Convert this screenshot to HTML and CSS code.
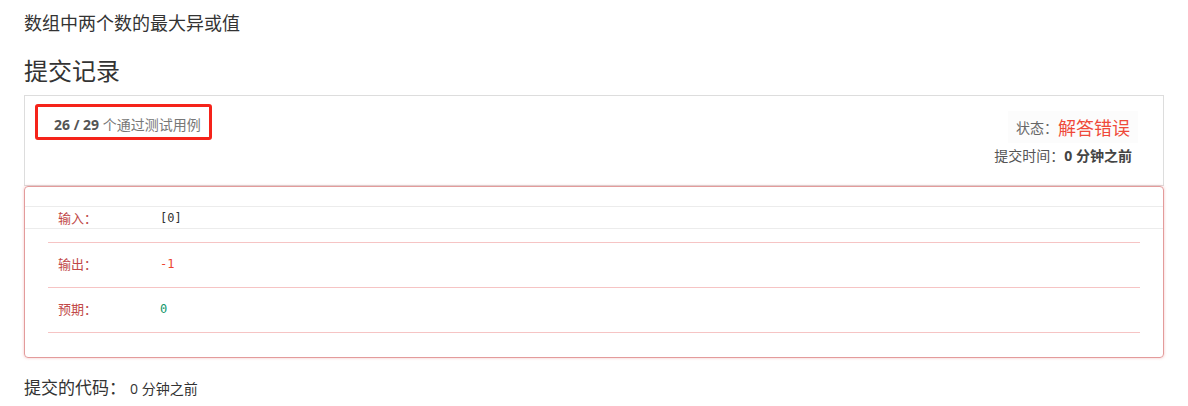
FILE: index.html
```html
<!DOCTYPE html>
<html lang="zh-CN">
<head>
    <meta charset="UTF-8">
    <title>提交记录</title>
    <link rel="stylesheet" href="styles.css">
</head>
<body>
<div class="page">
    <div class="problem-title">数组中两个数的最大异或值</div>
    <h2 class="section-title">提交记录</h2>

    <!-- 提交概要 -->
    <div class="summary">
        <div class="case-box">
            <b class="case-count">26 / 29</b> 个通过测试用例
        </div>
        <div class="summary-side">
            <div class="status-row">
                <span class="status-label">状态：</span><span class="status-value">解答错误</span>
            </div>
            <div class="time-row">
                提交时间：<b>0 分钟之前</b>
            </div>
        </div>
    </div>

    <!-- 错误用例 -->
    <div class="result-panel">
        <div class="input-row">
            <span class="row-label">输入：</span>
            <code class="row-value">[0]</code>
        </div>
        <div class="result-list">
            <div class="result-row">
                <span class="row-label">输出：</span>
                <code class="row-value value-wrong">-1</code>
            </div>
            <div class="result-row">
                <span class="row-label">预期：</span>
                <code class="row-value value-right">0</code>
            </div>
        </div>
    </div>

    <div class="code-title">
        提交的代码：<span class="code-time">0 分钟之前</span>
    </div>
</div>
</body>
</html>
```

FILE: styles.css
```css
body {
    margin: 0;
    padding: 0;
    background: #fff;
    color: #333;
    font-family: "Open Sans", "Noto Sans CJK SC", sans-serif;
}

.page {
    padding: 0 24px;
}

.problem-title {
    padding-top: 11px;
    font-size: 18px;
    line-height: 24px;
    color: #333;
}

.section-title {
    margin: 20px 0 8px;
    font-size: 24px;
    font-weight: normal;
    line-height: 32px;
    color: #333;
}

/* 顶部概要面板 */
.summary {
    display: flex;
    justify-content: space-between;
    align-items: flex-start;
    height: 91px;
    box-sizing: border-box;
    padding: 8px 31px 0 10px;
    border: 1px solid #ddd;
}

.case-box {
    width: 177px;
    height: 36px;
    box-sizing: border-box;
    padding: 9px 0 0 16px;
    border: 3px solid #f5231a;
    border-radius: 3px;
    font-size: 14px;
    line-height: 18px;
    color: #777;
    white-space: nowrap;
}

.case-count {
    color: #555;
}

.summary-side {
    display: flex;
    flex-direction: column;
    align-items: flex-end;
    padding-top: 7px;
}

.status-row {
    display: flex;
    align-items: center;
    height: 32px;
    padding: 0 8px;
    margin-right: -6px;
    background: #fcfcfc;
}

.status-label {
    font-size: 14px;
    color: #666;
}

.status-value {
    font-size: 18px;
    color: #ef4a3a;
}

.time-row {
    margin-top: 3px;
    font-size: 14px;
    line-height: 20px;
    color: #555;
}

.time-row b {
    color: #444;
}

/* 错误用例面板 */
.result-panel {
    padding: 19px 0 24px;
    border: 1px solid #e39b9b;
    border-radius: 4px;
    box-shadow: 0 0 3px rgba(230, 120, 120, 0.45);
}

.input-row {
    display: flex;
    align-items: center;
    height: 21px;
    padding-left: 33px;
    border-top: 1px solid #ececec;
    border-bottom: 1px solid #ececec;
}

.result-list {
    margin: 13px 23px 0;
    border-bottom: 1px solid #f6c4c4;
}

.result-row {
    display: flex;
    align-items: center;
    height: 45px;
    box-sizing: border-box;
    padding: 0 0 3px 10px;
    border-top: 1px solid #f6c4c4;
}

.row-label {
    width: 102px;
    font-family: "Noto Sans CJK SC", monospace;
    font-size: 13px;
    color: #c14848;
}

.row-value {
    font-family: "DejaVu Sans Mono", monospace;
    font-size: 12px;
    color: #333;
}

.value-wrong {
    color: #ec4430;
}

.value-right {
    color: #12966a;
}

.code-title {
    margin-top: 18px;
    font-size: 17px;
    line-height: 24px;
    color: #333;
}

.code-time {
    margin-left: 4px;
    font-size: 14px;
    color: #333;
}
```
